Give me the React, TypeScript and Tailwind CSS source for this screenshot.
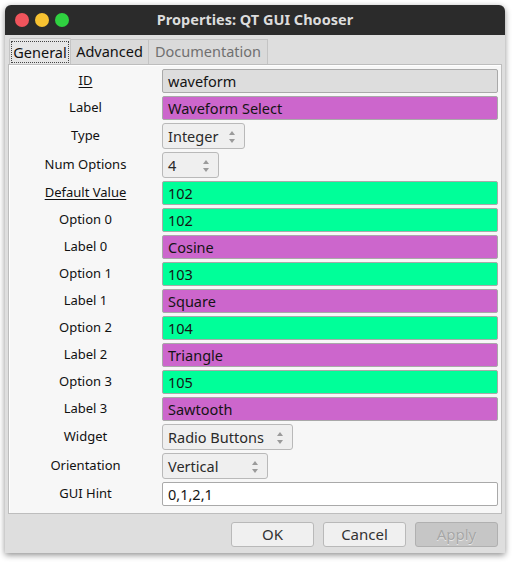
import React from 'react';

type Row = {
  label: string;
  value: string;
  kind: 'id' | 'str' | 'int' | 'combo' | 'plain';
  width?: number;
  underline?: boolean;
};

const rows: Row[] = [
  { label: 'ID', value: 'waveform', kind: 'id', underline: true },
  { label: 'Label', value: 'Waveform Select', kind: 'str' },
  { label: 'Type', value: 'Integer', kind: 'combo', width: 83 },
  { label: 'Num Options', value: '4', kind: 'combo', width: 57 },
  { label: 'Default Value', value: '102', kind: 'int', underline: true },
  { label: 'Option 0', value: '102', kind: 'int' },
  { label: 'Label 0', value: 'Cosine', kind: 'str' },
  { label: 'Option 1', value: '103', kind: 'int' },
  { label: 'Label 1', value: 'Square', kind: 'str' },
  { label: 'Option 2', value: '104', kind: 'int' },
  { label: 'Label 2', value: 'Triangle', kind: 'str' },
  { label: 'Option 3', value: '105', kind: 'int' },
  { label: 'Label 3', value: 'Sawtooth', kind: 'str' },
  { label: 'Widget', value: 'Radio Buttons', kind: 'combo', width: 131 },
  { label: 'Orientation', value: 'Vertical', kind: 'combo', width: 106 },
  { label: 'GUI Hint', value: '0,1,2,1', kind: 'plain' },
];

const fieldBg: Record<string, string> = {
  id: 'bg-[#dddddd]',
  str: 'bg-[#cc66cc]',
  int: 'bg-[#00ff99]',
  plain: 'bg-white',
};

function Spinner() {
  return (
    <svg width="8" height="14" viewBox="0 0 8 14" className="shrink-0">
      <path d="M4 1 L7 5 L1 5 Z" fill="#9a9a9a" />
      <path d="M1 9 L7 9 L4 13 Z" fill="#9a9a9a" />
    </svg>
  );
}

function Field({ row }: { row: Row }) {
  if (row.kind === 'combo') {
    return (
      <div
        className="flex h-[26px] items-center justify-between rounded-[3px] border border-[#b9b9b9] bg-[#efefef] pl-[5px] pr-[8px] pt-[1px] text-[14.5px] text-[#2a2a2a]"
        style={{ width: row.width }}
      >
        <span>{row.value}</span>
        <Spinner />
      </div>
    );
  }
  return (
    <div
      className={`flex h-[24px] flex-1 items-center rounded-[2px] border border-[#a9a9a9] pl-[5px] pt-[1px] text-[14.5px] text-[#141414] ${fieldBg[row.kind]}`}
    >
      {row.value}
    </div>
  );
}

function Light({ color }: { color: string }) {
  return <div className={`h-[14px] w-[14px] rounded-full ${color}`} />;
}

export default function App() {
  return (
    <div className="h-[563px] w-[514px] bg-white pl-[5px] pt-[5px] font-['Noto_Sans','Open_Sans',sans-serif]">
      <div className="flex h-[548px] w-[500px] flex-col overflow-hidden rounded-t-[6px] bg-[#dedede] shadow-[0_2px_6px_rgba(0,0,0,0.45)]">
        {/* title bar */}
        <div className="relative flex h-[30px] shrink-0 items-center bg-[#2b2b2b]">
          <div className="flex items-center gap-[6px] pl-[10px]">
            <Light color="bg-[#f0545c]" />
            <Light color="bg-[#f7c231]" />
            <Light color="bg-[#2fd140]" />
          </div>
          <div className="absolute inset-0 flex items-center justify-center text-[14.5px] font-bold text-[#dcdcdc]">
            Properties: QT GUI Chooser
          </div>
        </div>

        {/* tabs */}
        <div className="flex h-[29px] shrink-0 items-end pl-[4px] pt-[3px] text-[14.5px]">
          <div className="flex h-[26px] w-[62px] items-center justify-center rounded-t-[2px] border border-b-0 border-[#c4c4c4] bg-[#e6e6e6]">
            <span className="border border-dotted border-[#444] px-[1px] leading-[20px] text-[#111]">General</span>
          </div>
          <div className="flex h-[25px] w-[78px] items-center justify-center border border-b-0 border-l-0 border-[#c4c4c4] bg-[#dadada] text-[#111]">
            Advanced
          </div>
          <div className="flex h-[25px] w-[119px] items-center justify-center border border-b-0 border-l-0 border-[#c4c4c4] bg-[#dadada] text-[#707070]">
            Documentation
          </div>
        </div>

        {/* panel */}
        <div className="mx-[3px] flex flex-col gap-[3px] border border-[#bdbdbd] bg-[#f7f7f7] pb-[7px] pr-[3px] pt-[4px] shadow-[inset_1px_1px_0_#ffffff]">
          {rows.map((row) => (
            <div key={row.label} className="flex items-center">
              <div
                className={`w-[153px] shrink-0 text-center text-[13px] text-[#111] ${row.underline ? 'underline underline-offset-2' : ''}`}
              >
                {row.label}
              </div>
              <Field row={row} />
            </div>
          ))}
        </div>

        {/* buttons */}
        <div className="flex flex-1 items-start justify-end gap-[9px] pr-[7px] pt-[8px] text-[15px]">
          <div className="flex h-[25px] w-[83px] items-center justify-center rounded-[3px] border border-[#b9b9b9] bg-[#f0f0f0] text-[#333]">
            OK
          </div>
          <div className="flex h-[25px] w-[83px] items-center justify-center rounded-[3px] border border-[#b9b9b9] bg-[#f0f0f0] text-[#333]">
            Cancel
          </div>
          <div className="flex h-[25px] w-[83px] items-center justify-center rounded-[3px] border border-[#b0b0b0] bg-[#c6c6c6] text-[#a6a6a6] [text-shadow:0_1px_0_#e8e8e8]">
            Apply
          </div>
        </div>
      </div>
    </div>
  );
}
